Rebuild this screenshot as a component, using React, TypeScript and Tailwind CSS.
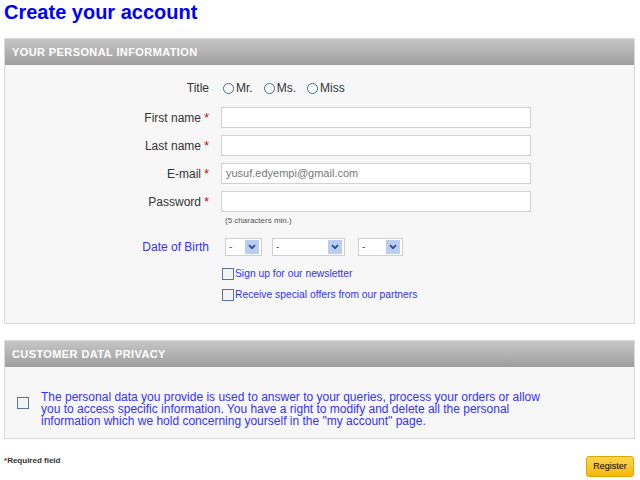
import React from "react";

const font = { fontFamily: '"Liberation Sans", Arial, sans-serif' };

function Radio({ label }: { label: string }) {
  return (
    <span className="flex items-center mr-[11px]">
      <span className="w-[11px] h-[11px] rounded-full border border-[#3c6a9c] bg-white inline-block mr-[2px]" />
      <span className="text-[12px] text-[#333]">{label}</span>
    </span>
  );
}

function Box() {
  return <span className="w-[12px] h-[12px] border border-[#5a7593] bg-[#f3f3f3] inline-block shrink-0" />;
}

function Sel({ w }: { w: string }) {
  return (
    <div className={`${w} h-[18px] border border-[#cfcfcf] bg-white flex items-center justify-between pl-[3px] pr-[2px]`}>
      <span className="text-[10px] text-[#555] leading-none">-</span>
      <span className="w-[14px] h-[14px] bg-[#b9cdf2] flex items-center justify-center">
        <svg width="8" height="6" viewBox="0 0 8 6">
          <path d="M1 1.2 L4 4.2 L7 1.2" stroke="#2d4f86" strokeWidth="1.8" fill="none" />
        </svg>
      </span>
    </div>
  );
}

function Row({ label, value }: { label: string; value?: string }) {
  return (
    <div className="flex items-center">
      <div className="w-[204px] text-right text-[12px] text-[#333]">
        {label} <span className="text-[#c00]">*</span>
      </div>
      <div className="ml-[12px] w-[310px] h-[21px] border border-[#d2d2d2] bg-white flex items-center pl-[4px] text-[11px] text-[#777]">
        {value}
      </div>
    </div>
  );
}

function Header({ text }: { text: string }) {
  return (
    <div className="h-[26px] bg-gradient-to-b from-[#c6c6c6] to-[#9e9e9e] flex items-center pl-[7px] text-white font-bold text-[11px] tracking-[0.4px]">
      {text}
    </div>
  );
}

export default function App() {
  return (
    <div style={font} className="w-[640px] h-[480px] bg-white relative">
      <h1 className="text-[20px] font-bold text-[#0000ff] pl-[4px] leading-[24px]">Create your account</h1>
      <div className="ml-[4px] mt-[14px] w-[631px] border border-[#dadada] bg-[#f7f7f7]">
        <Header text="YOUR PERSONAL INFORMATION" />
        <div className="pt-[15px] pb-[20px]">
          <div className="flex items-center h-[16px]">
            <div className="w-[204px] text-right text-[12px] text-[#333]">Title</div>
            <div className="ml-[14px] flex items-center">
              <Radio label="Mr." />
              <Radio label="Ms." />
              <Radio label="Miss" />
            </div>
          </div>
          <div className="mt-[11px] flex flex-col gap-[7px]">
            <Row label="First name" />
            <Row label="Last name" />
            <Row label="E-mail" value="yusuf.edyempi@gmail.com" />
            <Row label="Password" />
          </div>
          <div className="ml-[220px] mt-[4px] text-[8px] text-[#555] leading-[10px]">(5 characters min.)</div>
          <div className="flex items-center mt-[12px]">
            <div className="w-[204px] text-right text-[12px] text-[#3333ff]">Date of Birth</div>
            <div className="ml-[16px] flex items-center">
              <Sel w="w-[37px]" />
              <div className="w-[10px]" />
              <Sel w="w-[73px]" />
              <div className="w-[13px]" />
              <Sel w="w-[45px]" />
            </div>
          </div>
          <div className="ml-[217px] mt-[10px] flex items-center">
            <Box />
            <span className="ml-[1px] text-[10.3px] text-[#3333ff]">Sign up for our newsletter</span>
          </div>
          <div className="ml-[217px] mt-[6px] flex items-center">
            <Box />
            <span className="ml-[1px] text-[10.3px] text-[#3333ff]">Receive special offers from our partners</span>
          </div>
        </div>
      </div>
      <div className="ml-[4px] mt-[16px] w-[631px] border border-[#dadada] bg-[#f7f7f7]">
        <Header text="CUSTOMER DATA PRIVACY" />
        <div className="flex pt-[24px] pb-[11px] pl-[12px]">
          <div className="pt-[1px]">
            <Box />
          </div>
          <p className="ml-[12px] w-[500px] text-[12px] leading-[12px] text-[#3333ff]">
            The personal data you provide is used to answer to your queries, process your orders or allow you to access specific information. You have a right to modify and delete all the personal information which we hold concerning yourself in the "my account" page.
          </p>
        </div>
      </div>
      <div className="flex justify-between items-start mt-[17px] pl-[4px] pr-[6px]">
        <div className="text-[8px] text-[#333] font-bold leading-[10px]">
          <span className="text-[#c00]">*</span>Required field
        </div>
        <button className="w-[48px] h-[21px] rounded-[3px] border border-[#e0a600] bg-gradient-to-b from-[#ffd64a] to-[#f5b800] text-[9px] text-black">
          Register
        </button>
      </div>
    </div>
  );
}
